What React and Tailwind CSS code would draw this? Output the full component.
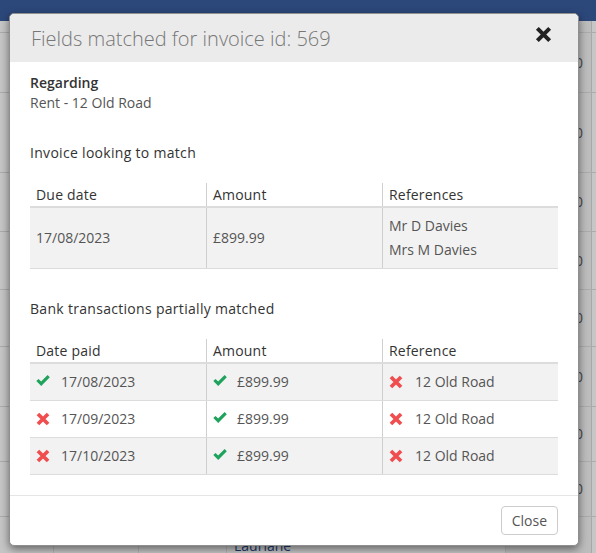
import React from 'react';

const bgRows = [12, 60, 80, 59, 58, 57, 60, 55, 55, 58];

const CheckIcon = () => (
  <svg viewBox="0 0 14 12" className="h-[12px] w-[14px] shrink-0 -translate-y-[2px]">
    <path d="M1.4 6 L5.2 9.7 L12.7 2.1" fill="none" stroke="#1fa35c" strokeWidth="3.1" />
  </svg>
);

const CrossIcon = ({ color = '#f04e4e', size = 14, stroke = 3.4 }) => (
  <svg viewBox="0 0 13 13" style={{ width: size, height: size }} className="shrink-0">
    <path d="M1.8 1.8 L11.2 11.2 M11.2 1.8 L1.8 11.2" fill="none" stroke={color} strokeWidth={stroke} />
  </svg>
);

const Mark = ({ ok }) => (ok ? <CheckIcon /> : <CrossIcon />);

const transactions = [
  { date: '17/08/2023', dateOk: true, amount: '£899.99', amountOk: true, reference: '12 Old Road', refOk: false },
  { date: '17/09/2023', dateOk: false, amount: '£899.99', amountOk: true, reference: '12 Old Road', refOk: false },
  { date: '17/10/2023', dateOk: false, amount: '£899.99', amountOk: true, reference: '12 Old Road', refOk: false },
];

const Background = () => (
  <div className="flex h-full flex-col">
    <div className="h-[21px] shrink-0 bg-[#2c477a]" />
    {bgRows.map((h, i) => (
      <div key={i} className="flex shrink-0 border-b border-[#acacac]" style={{ height: h }}>
        <div className="w-[54px] border-r border-[#b4b4b4]" />
        <div className="w-[85px] border-r border-[#b4b4b4]" />
        <div className="w-[88px] border-r border-[#b4b4b4]" />
        <div className="flex w-[279px] items-center border-r border-[#b4b4b4] pl-[7px] text-sm text-[#1f3a6e]">
          {i === bgRows.length - 1 ? 'Lauriane' : ''}
        </div>
        <div className="flex w-[86px] items-center justify-end border-r border-[#a8a8a8] bg-[#bdbdbd] pr-[8px] text-sm text-[#4a4a4a]">
          {i > 0 && i < bgRows.length - 1 ? '£899.00' : ''}
        </div>
        <div className="flex-1" />
      </div>
    ))}
  </div>
);

const App = () => {
  return (
    <div className="relative h-[553px] w-[596px] overflow-hidden bg-[#c6c6c6] font-['Open_Sans',sans-serif]">
      <Background />

      {/* Modal */}
      <div className="absolute left-[9px] top-[13px] w-[570px] rounded-[5px] border border-[#8f8f8f] bg-white shadow-[0_3px_9px_rgba(0,0,0,0.5)]">
        {/* Header */}
        <div className="flex h-[48px] items-start justify-between rounded-t-[5px] bg-[#ebebeb] pl-[21px] pr-[26px]">
          <h4 className="mt-[11px] text-[20px] font-light leading-[28px] text-[#777]">Fields matched for invoice id: 569</h4>
          <button type="button" className="mt-[12px]">
            <CrossIcon color="#222" size={17} stroke={3.1} />
          </button>
        </div>

        {/* Body */}
        <div className="px-[20px] pt-[11px] pb-[20px] text-sm leading-5">
          <div className="font-semibold text-[#333]">Regarding</div>
          <div className="text-[#555]">Rent - 12 Old Road</div>

          <div className="mt-[30px] tracking-[0.3px] text-[#333]">Invoice looking to match</div>
          <div className="mt-5">
            <div className="grid grid-cols-3 border-b-2 border-[#dcdcdc] tracking-[0.2px] text-[#333]">
              <div className="flex h-[23px] items-center pl-[6px]">Due date</div>
              <div className="flex h-[23px] items-center border-l border-[#cfcfcf] pl-[6px]">Amount</div>
              <div className="flex h-[23px] items-center border-l border-[#cfcfcf] pl-[6px]">References</div>
            </div>
            <div className="grid grid-cols-3 border-b border-[#dcdcdc] bg-[#f2f2f2] text-[#555]">
              <div className="flex items-center py-[6px] pl-[6px] leading-6">17/08/2023</div>
              <div className="flex items-center border-l border-[#cfcfcf] py-[6px] pl-[6px] leading-6">£899.99</div>
              <div className="border-l border-[#cfcfcf] py-[6px] pl-[6px] leading-6">
                <div>Mr D Davies</div>
                <div>Mrs M Davies</div>
              </div>
            </div>
          </div>

          <div className="mt-[30px] tracking-[0.3px] text-[#333]">Bank transactions partially matched</div>
          <div className="mt-5">
            <div className="grid grid-cols-3 border-b-2 border-[#dcdcdc] tracking-[0.2px] text-[#333]">
              <div className="flex h-[23px] items-center pl-[6px]">Date paid</div>
              <div className="flex h-[23px] items-center border-l border-[#cfcfcf] pl-[6px]">Amount</div>
              <div className="flex h-[23px] items-center border-l border-[#cfcfcf] pl-[6px]">Reference</div>
            </div>
            {transactions.map((t, i) => (
              <div
                key={i}
                className={`grid grid-cols-3 border-b border-[#dcdcdc] text-[#555] ${i % 2 === 0 ? 'bg-[#f2f2f2]' : 'bg-white'}`}
              >
                <div className="flex items-center gap-[11px] py-[6px] pl-[6px] leading-6">
                  <Mark ok={t.dateOk} />
                  <span>{t.date}</span>
                </div>
                <div className="flex items-center gap-[10px] border-l border-[#cfcfcf] py-[6px] pl-[6px] leading-6">
                  <Mark ok={t.amountOk} />
                  <span>{t.amount}</span>
                </div>
                <div className="flex items-center gap-[12px] border-l border-[#cfcfcf] py-[6px] pl-[6px] leading-6">
                  <Mark ok={t.refOk} />
                  <span>{t.reference}</span>
                </div>
              </div>
            ))}
          </div>
        </div>

        {/* Footer */}
        <div className="flex justify-end border-t border-[#e5e5e5] px-[20px] py-[10px]">
          <button
            type="button"
            className="h-[29px] rounded-[4px] border border-[#cccccc] bg-white px-[10px] text-sm text-[#555]"
          >
            Close
          </button>
        </div>
      </div>
    </div>
  );
};

export default App;
